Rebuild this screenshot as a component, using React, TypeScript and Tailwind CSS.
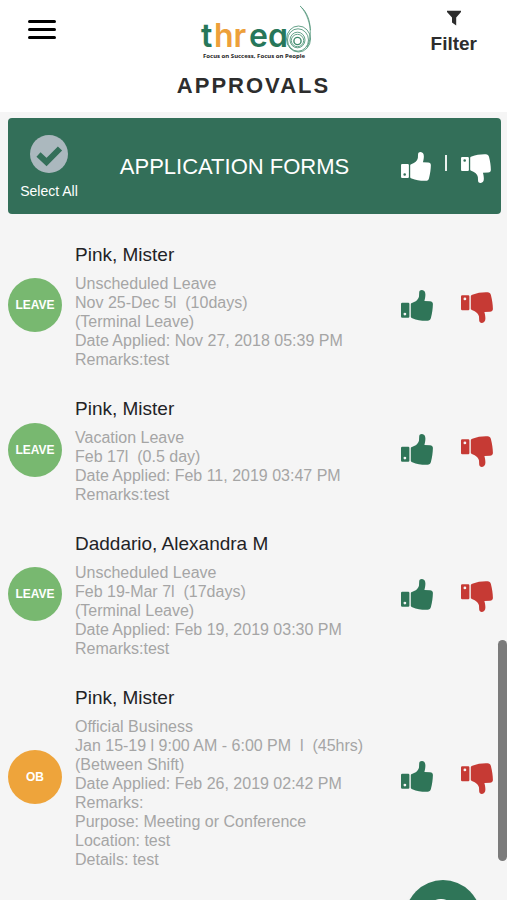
type ApprovalItem = {
  id: number;
  kind: "LEAVE" | "OB";
  name: string;
  lines: string[];
};

const items: ApprovalItem[] = [
  {
    id: 1,
    kind: "LEAVE",
    name: "Pink, Mister",
    lines: [
      "Unscheduled Leave",
      "Nov 25-Dec 5l\u00a0 (10days)",
      "(Terminal Leave)",
      "Date Applied: Nov 27, 2018 05:39 PM",
      "Remarks:test",
    ],
  },
  {
    id: 2,
    kind: "LEAVE",
    name: "Pink, Mister",
    lines: [
      "Vacation Leave",
      "Feb 17l\u00a0 (0.5 day)",
      "Date Applied: Feb 11, 2019 03:47 PM",
      "Remarks:test",
    ],
  },
  {
    id: 3,
    kind: "LEAVE",
    name: "Daddario, Alexandra M",
    lines: [
      "Unscheduled Leave",
      "Feb 19-Mar 7l\u00a0 (17days)",
      "(Terminal Leave)",
      "Date Applied: Feb 19, 2019 03:30 PM",
      "Remarks:test",
    ],
  },
  {
    id: 4,
    kind: "OB",
    name: "Pink, Mister",
    lines: [
      "Official Business",
      "Jan 15-19 l 9:00 AM - 6:00 PM\u00a0 l\u00a0 (45hrs)",
      "(Between Shift)",
      "Date Applied: Feb 26, 2019 02:42 PM",
      "Remarks:",
      "Purpose: Meeting or Conference",
      "Location: test",
      "Details: test",
    ],
  },
];

function Thumb({ down = false, className }: { down?: boolean; className: string }) {
  return (
    <svg viewBox="0 0 32 31" className={className} fill="currentColor" aria-hidden="true">
      <g transform={down ? "translate(0 31) scale(1 -1)" : undefined}>
        <path
          fillRule="evenodd"
          d="M1.2 12.7h6a1.2 1.2 0 0 1 1.2 1.2v12.7a1.2 1.2 0 0 1-1.2 1.2h-6A1.2 1.2 0 0 1 0 26.6V13.9a1.2 1.2 0 0 1 1.2-1.2ZM3.900 22.700a1.400 1.400 0 1 0 0 2.800a1.400 1.400 0 0 0 0-2.800Z"
        />
        <path d="M9.800 14.500C9.800 13.500 10.500 13.100 11.500 12.800C14.500 11.800 17.500 9.500 18 6.500L18.200 2.500C18.300 .8 19.500 0 21 .1C23.200 .3 24.400 1.900 24.400 4.500C24.400 7 23.900 9.200 23.400 11L29 11.200C31 11.300 32 12.500 31.900 14.200C31.800 18.500 31.200 23 29.900 28C29.400 29.900 28.300 30.700 26.500 30.800C21.500 31 16 30.300 11.300 28.300C10.300 27.900 9.800 27.500 9.800 26.600Z" />
      </g>
    </svg>
  );
}

function Logo() {
  return (
    <svg viewBox="0 0 116 56" className="h-14 w-[116px]" role="img" aria-label="thread">
      <text
        y="43"
        fontSize="32"
        className="font-semibold [font-family:Inter,sans-serif] [font-feature-settings:'cv11','ss01']"
      >
        <tspan x="5" fill="#27775a">t</tspan>
        <tspan x="18" fill="#eda03a">hr</tspan>
        <tspan x="53" fill="#27775a">ea</tspan>
      </text>
      <g fill="none" stroke="#3f8a6c" strokeWidth="0.8">
        <ellipse cx="102.500" cy="35" rx="12" ry="13" />
        <ellipse cx="102" cy="36" rx="10.500" ry="11.200" />
        <ellipse cx="101.500" cy="36" rx="7.500" ry="7.800" />
        <circle cx="101.500" cy="36.500" r="6.200" />
        <circle cx="101.500" cy="37" r="3.600" strokeWidth="1.400" />
        <path d="M104 2C109 6 113 13 114 22C114.500 29 114.500 37 111 43" />
        <path d="M105.500 3.500C110 9 113 16 114.500 26" strokeWidth="0.600" />
      </g>
      <text
        x="7"
        y="54"
        fontSize="6"
        fill="#222222"
        className="font-bold [font-family:'Noto_Sans',sans-serif]"
      >
        Focus on Success, Focus on People
      </text>
    </svg>
  );
}

function Header() {
  return (
    <header className="bg-white pb-3">
      <div className="grid grid-cols-[1fr_auto_1fr] items-start pt-1">
        <button type="button" aria-label="Open menu" className="ml-7 mt-4 flex w-7 flex-col gap-[5px]">
          <span className="h-[3px] w-full rounded-full bg-black" />
          <span className="h-[3px] w-full rounded-full bg-black" />
          <span className="h-[3px] w-full rounded-full bg-black" />
        </button>
        <Logo />
        <button
          type="button"
          className="mr-[30px] mt-1.5 flex flex-col items-center gap-2 justify-self-end text-[19px] font-bold leading-5 text-[#2d2d2d]"
        >
          <svg viewBox="0 0 16 16" className="size-4" fill="currentColor" aria-hidden="true">
            <path d="M1 .8h14v1.200L10.200 7.500V15.500L6 12.500V7.500L1 2Z" />
          </svg>
          Filter
        </button>
      </div>
      <h1 className="mt-3 text-center text-[22px] font-bold leading-7 tracking-[2px] text-[#2d2d2d]">
        APPROVALS
      </h1>
    </header>
  );
}

function BulkBar() {
  return (
    <section className="ml-2 mr-1.5 mt-1.5 flex h-24 items-center rounded bg-[#336f59] pl-3 pr-2.5 text-white">
      <label className="mt-1 flex w-[58px] flex-col items-center gap-2 text-[14px] leading-5">
        <span className="grid place-items-center">
          <input
            type="checkbox"
            className="col-start-1 row-start-1 size-[38px] appearance-none rounded-full bg-[#abb8be]"
          />
          <svg viewBox="0 0 38 38" className="pointer-events-none col-start-1 row-start-1 size-[38px]" aria-hidden="true">
            <path
              d="M8.500 19.500L16.500 27L30 13.500"
              fill="none"
              stroke="#336f59"
              strokeWidth="6"
            />
          </svg>
        </span>
        <span className="whitespace-nowrap">Select All</span>
      </label>
      <h2 className="flex-1 pr-2.5 pt-0.5 text-center text-[22px] leading-7">APPLICATION FORMS</h2>
      <div className="flex w-[90px] items-center justify-between">
        <button type="button" aria-label="Approve selected">
          <Thumb className="h-[29px] w-[30px]" />
        </button>
        <span className="mb-1.5 h-4 w-0.5 bg-white/90" />
        <button type="button" aria-label="Reject selected" className="mt-1">
          <Thumb down className="h-[29px] w-[30px]" />
        </button>
      </div>
    </section>
  );
}

function Row({ item }: { item: ApprovalItem }) {
  return (
    <li className="flex items-center pb-[15px] pl-2 pr-3.5 pt-[13px]">
      <span
        className={`mb-0.5 grid size-[54px] shrink-0 place-items-center rounded-full text-[12px] font-bold text-white ${
          item.kind === "OB" ? "bg-[#eea43b]" : "bg-[#78b870]"
        }`}
      >
        {item.kind}
      </span>
      <div className="ml-[13px] min-w-0 flex-1">
        <h3 className="mb-[7px] text-[19px] leading-6 text-[#1f2326]">{item.name}</h3>
        {item.lines.map((line) => (
          <p key={line} className="text-[16px] leading-[19px] text-[#a5a5a5]">
            {line}
          </p>
        ))}
      </div>
      <div className="mb-0.5 flex shrink-0 items-center gap-7">
        <button type="button" aria-label={`Approve ${item.name}`} className="text-[#2f7558]">
          <Thumb className="h-[31px] w-8" />
        </button>
        <button type="button" aria-label={`Reject ${item.name}`} className="mt-1 text-[#c63a34]">
          <Thumb down className="h-[31px] w-8" />
        </button>
      </div>
    </li>
  );
}

export default function App() {
  return (
    <div className="relative h-screen overflow-hidden bg-[#f5f5f5] [font-family:'Liberation_Sans',Arial,sans-serif]">
      <Header />
      <main>
        <BulkBar />
        <ul className="mt-4">
          {items.map((item) => (
            <Row key={item.id} item={item} />
          ))}
        </ul>
      </main>
      <div className="absolute right-0 top-[640px] h-[221px] w-[9px] rounded-full bg-[#7b7b7b]" />
      <button
        type="button"
        aria-label="Search"
        className="absolute -bottom-14 right-[26px] grid size-[76px] place-items-center rounded-full bg-[#2f7558] text-white shadow-md"
      >
        <svg viewBox="0 0 40 40" className="size-10" fill="none" stroke="currentColor" strokeWidth="4" aria-hidden="true">
          <circle cx="18" cy="16" r="13" />
          <path d="M27 26L37 37" />
        </svg>
      </button>
    </div>
  );
}
